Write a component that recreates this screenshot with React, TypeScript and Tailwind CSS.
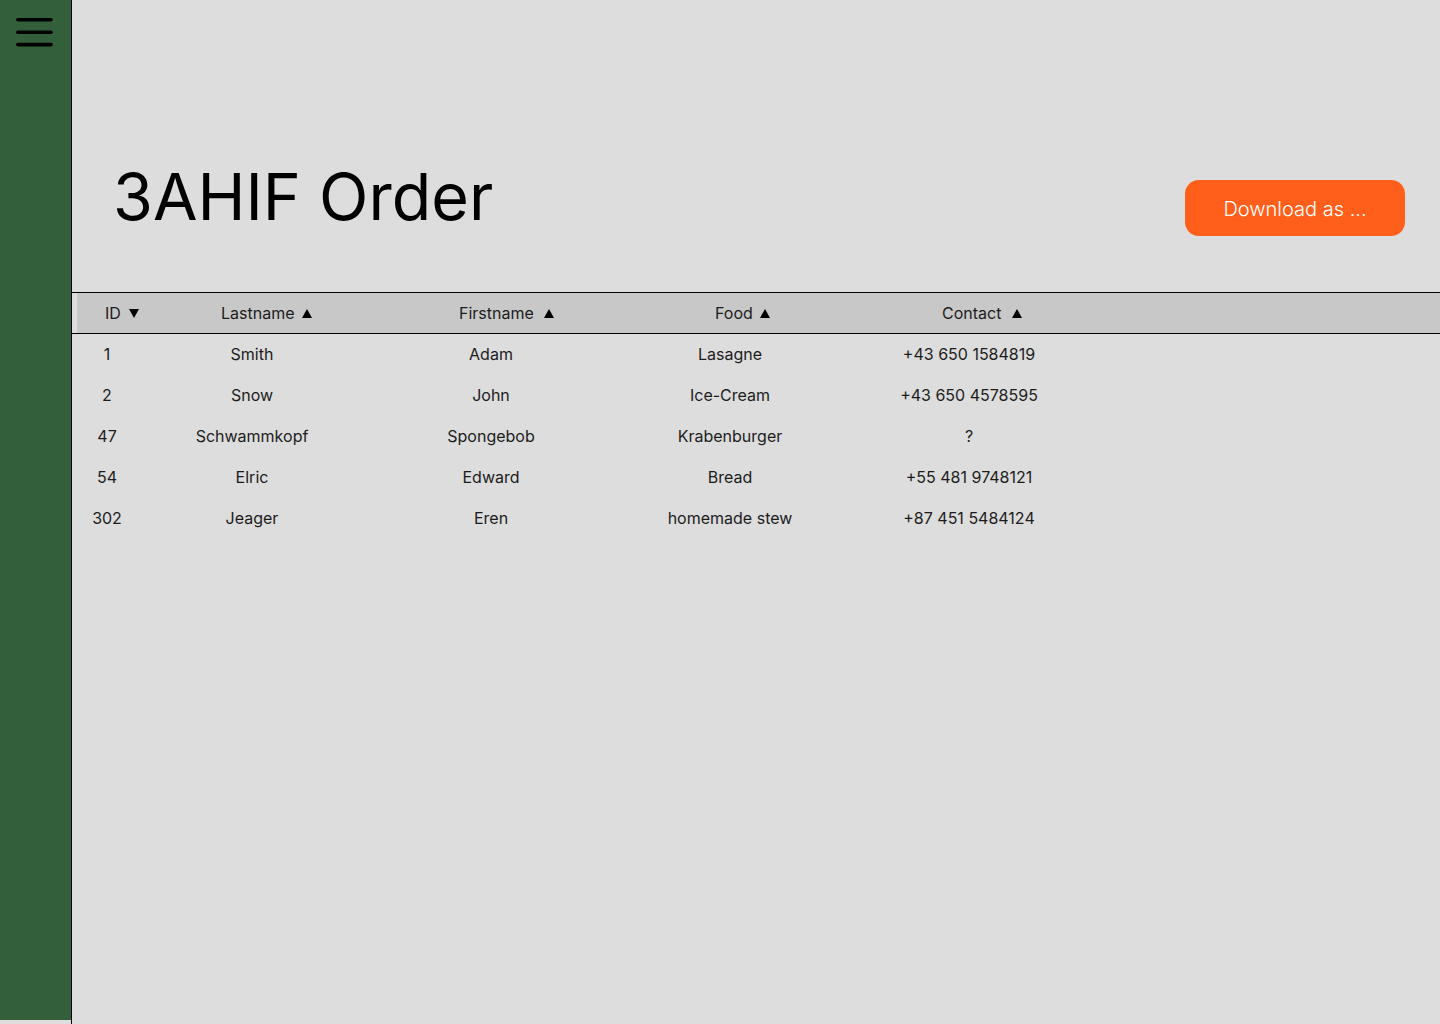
import React from "react";

const rows = [
  { id: "1", last: "Smith", first: "Adam", food: "Lasagne", contact: "+43 650 1584819" },
  { id: "2", last: "Snow", first: "John", food: "Ice-Cream", contact: "+43 650 4578595" },
  { id: "47", last: "Schwammkopf", first: "Spongebob", food: "Krabenburger", contact: "?" },
  { id: "54", last: "Elric", first: "Edward", food: "Bread", contact: "+55 481 9748121" },
  { id: "302", last: "Jeager", first: "Eren", food: "homemade stew", contact: "+87 451 5484124" },
];

function Up() {
  return (
    <svg width="10" height="9" viewBox="0 0 10 9" className="block shrink-0">
      <polygon points="5,0 10,9 0,9" fill="#000" />
    </svg>
  );
}
function Down() {
  return (
    <svg width="10" height="9" viewBox="0 0 10 9" className="block shrink-0">
      <polygon points="0,0 10,0 5,9" fill="#000" />
    </svg>
  );
}

export default function App() {
  return (
    <div
      className="flex min-h-[1024px] w-[1440px] bg-[#dddddd] text-[#1c1c1c]"
      style={{ fontFamily: "Inter, 'Noto Sans', sans-serif" }}
    >
      <aside className="w-[71px] h-[1020px] bg-[#33603a] shrink-0">
        <svg width="71" height="64" viewBox="0 0 71 64" className="block">
          <g stroke="#000" strokeWidth="3.6" strokeLinecap="round">
            <line x1="17.8" y1="19.8" x2="51" y2="19.8" />
            <line x1="17.8" y1="32.3" x2="51" y2="32.3" />
            <line x1="17.8" y1="44.6" x2="51" y2="44.6" />
          </g>
        </svg>
      </aside>
      <main className="flex-1 border-l border-black min-h-[1024px]">
        <div className="flex h-[292px] items-start justify-between">
          <h1 className="mt-[165px] pl-[41px] text-[64.6px] leading-none font-normal text-black">
            3AHIF Order
          </h1>
          <button className="mt-[180px] mr-[35px] h-[56px] w-[220px] rounded-[14px] bg-[#ff5f1a] pt-[2px] text-[20px] font-light text-white">
            Download as ...
          </button>
        </div>
        <div className="border-y border-black">
          <div className="ml-[5px] h-[40px] bg-[#c8c8c8] grid grid-cols-[60px_230px_248px_230px_248px] items-center text-[16px]">
            <div className="flex items-center pl-[28px] gap-[8px] whitespace-nowrap">
              <span>ID</span>
              <Down />
            </div>
            <div className="flex items-center pl-[84px] gap-[7px]">
              <span>Lastname</span>
              <Up />
            </div>
            <div className="flex items-center pl-[92px] gap-[10px]">
              <span>Firstname</span>
              <Up />
            </div>
            <div className="flex items-center pl-[100px] gap-[7px]">
              <span>Food</span>
              <Up />
            </div>
            <div className="flex items-center pl-[97px] gap-[11px]">
              <span>Contact</span>
              <Up />
            </div>
          </div>
        </div>
        <div className="ml-[5px]">
          {rows.map((r) => (
            <div
              key={r.id}
              className="h-[41px] pb-[2px] grid grid-cols-[60px_230px_248px_230px_248px] items-center text-center text-[16px] text-[#1c1c1c]"
            >
              <div>{r.id}</div>
              <div>{r.last}</div>
              <div>{r.first}</div>
              <div>{r.food}</div>
              <div>{r.contact}</div>
            </div>
          ))}
        </div>
      </main>
    </div>
  );
}
